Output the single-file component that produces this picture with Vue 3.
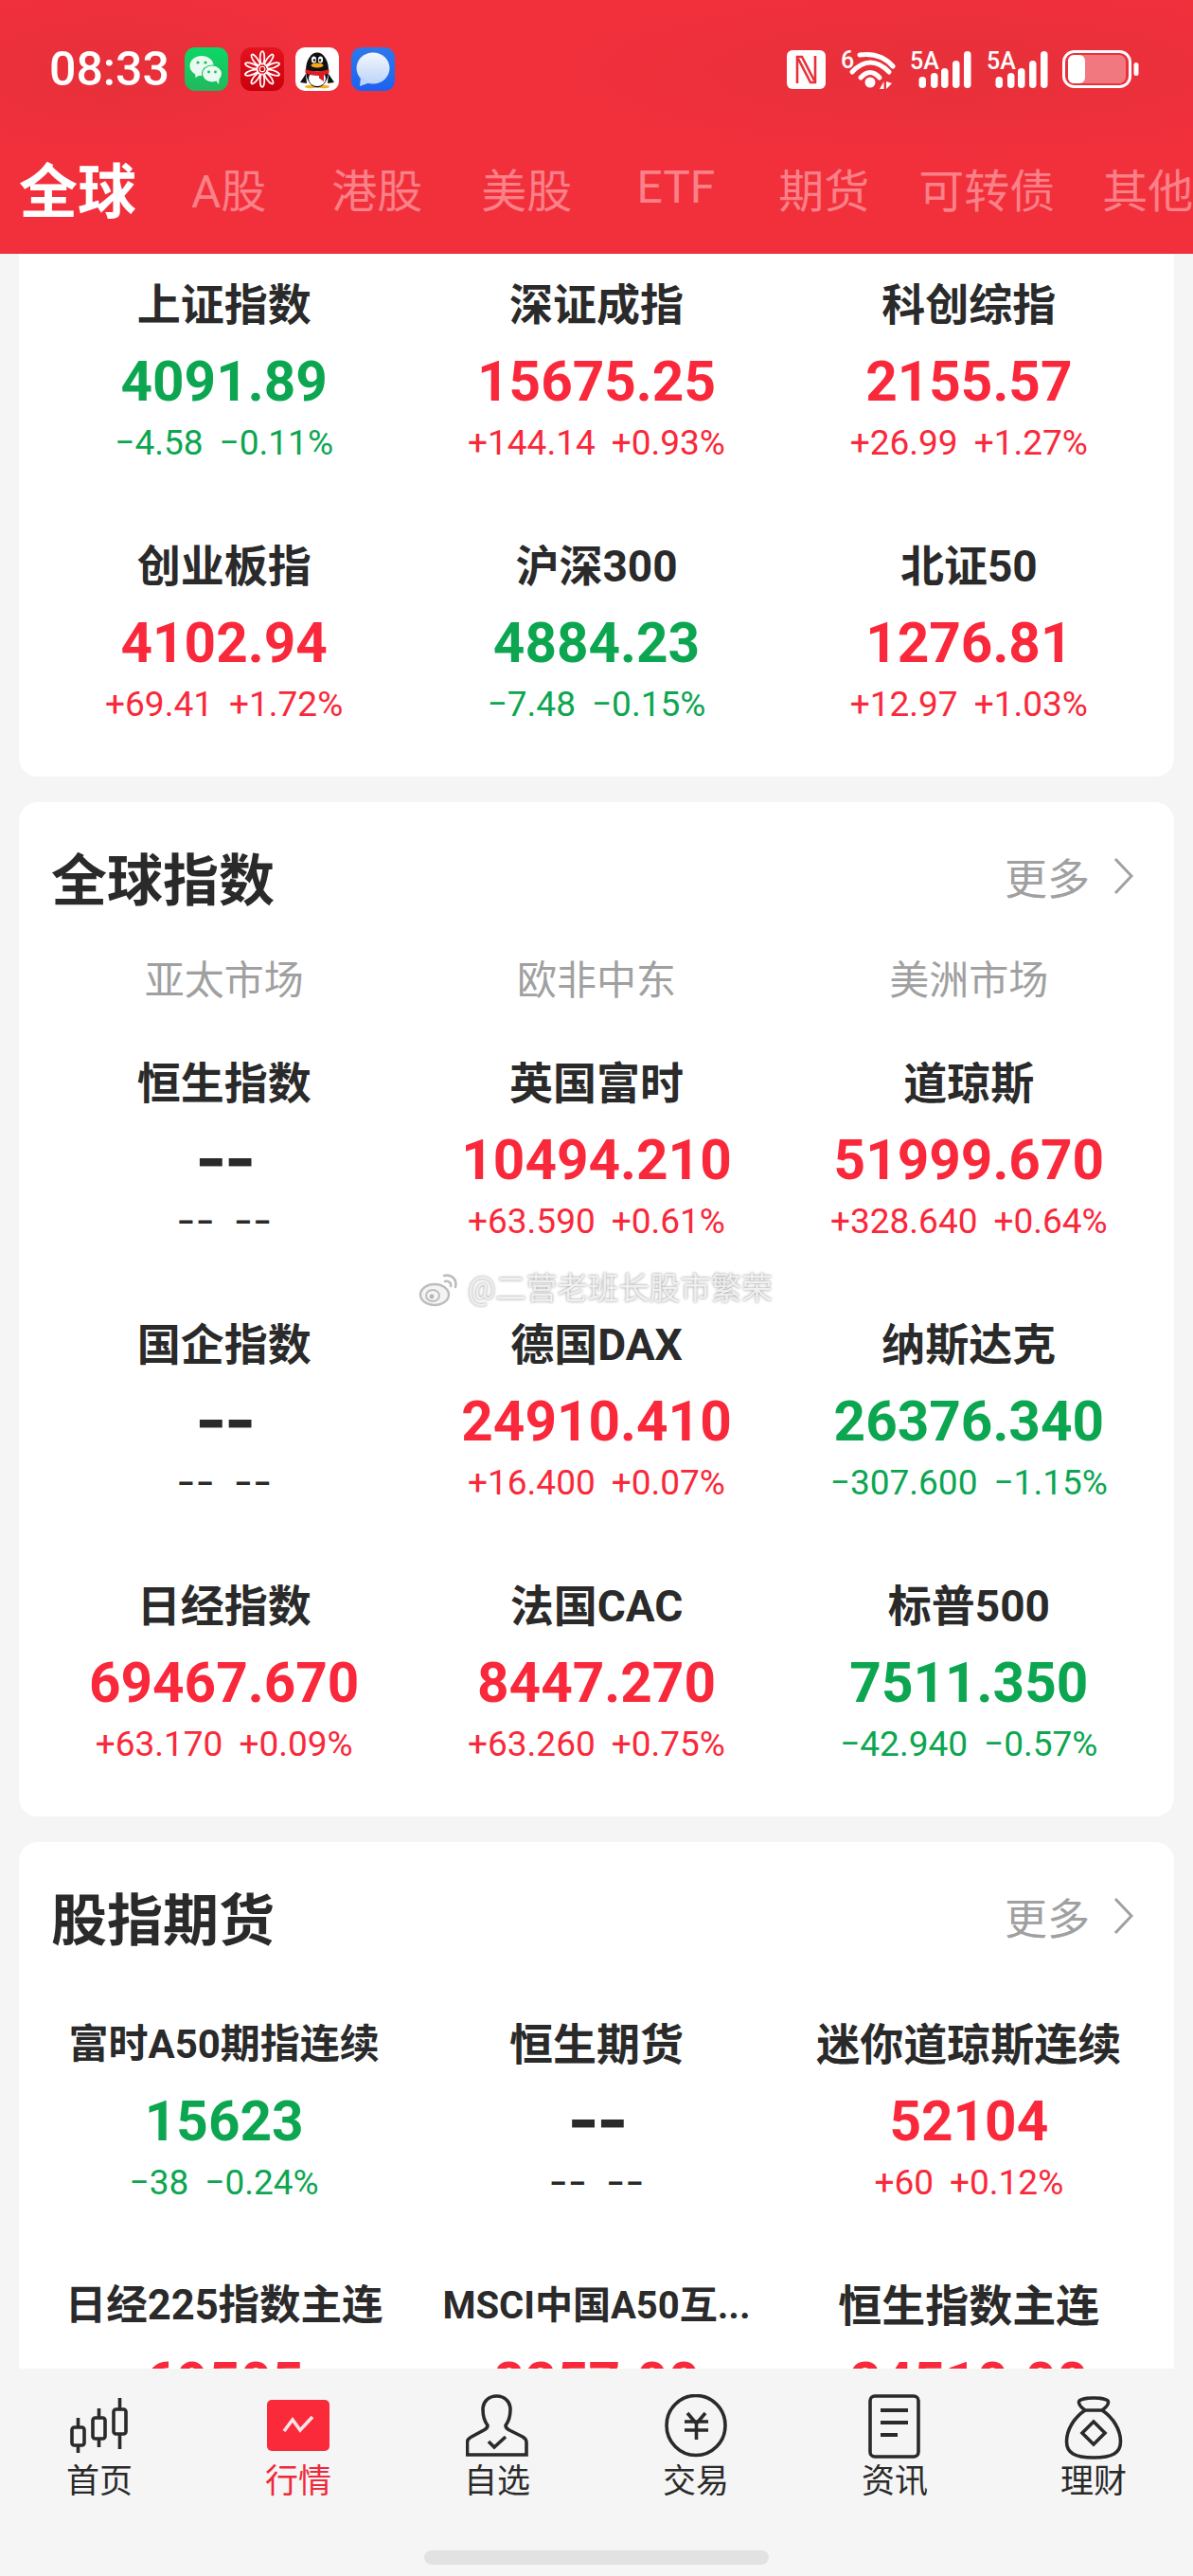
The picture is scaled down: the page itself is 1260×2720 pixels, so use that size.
<template>
  <div class="page">
    <header class="top">
      <div class="status">
        <div class="status-left">
          <span class="time">08:33</span>
          <div class="apps">
            <svg class="app" viewBox="0 0 46 46">
              <defs>
                <linearGradient id="wx" x1="0" y1="0" x2="0" y2="1"><stop offset="0" stop-color="#0bd866" /><stop offset="1" stop-color="#22b85c" /></linearGradient>
                <linearGradient id="wb" x1="0" y1="0" x2="0" y2="1"><stop offset="0" stop-color="#e4131f" /><stop offset="1" stop-color="#c9000d" /></linearGradient>
                <linearGradient id="msg" x1="0" y1="0" x2="0" y2="1"><stop offset="0" stop-color="#2f78ea" /><stop offset="1" stop-color="#1c62f0" /></linearGradient>
                <linearGradient id="bub" x1="0" y1="0" x2="0" y2="1"><stop offset="0" stop-color="#f4f7fd" /><stop offset="1" stop-color="#bcd4f8" /></linearGradient>
              </defs>
              <rect width="46" height="46" rx="11" fill="url(#wx)" />
              <ellipse cx="18" cy="19.5" rx="12.5" ry="10.5" fill="#e9fbf0" />
              <path d="M11 26 L11.5 32 L18 28Z" fill="#e9fbf0" />
              <ellipse cx="29" cy="28" rx="11" ry="9.5" fill="#0fc45e" />
              <ellipse cx="29" cy="28" rx="10" ry="8.5" fill="#e9fbf0" />
              <path d="M33 35 L36 39 L36.5 33Z" fill="#e9fbf0" />
              <circle cx="14" cy="16" r="1.6" fill="#22b85c" /><circle cx="22" cy="16" r="1.6" fill="#22b85c" />
              <circle cx="25.5" cy="26" r="1.4" fill="#22b85c" /><circle cx="32.5" cy="26" r="1.4" fill="#22b85c" />
            </svg>
            <svg class="app" viewBox="0 0 46 46">
              <rect width="46" height="46" rx="11" fill="url(#wb)" />
              <g fill="none" stroke="#fff" stroke-width="1.7">
                <ellipse v-for="a in petals" :key="a" cx="23" cy="11" rx="2.3" ry="7" :transform="`rotate(${a} 23 23)`" />
              </g>
              <circle cx="23" cy="23" r="4.5" fill="#d60a16" />
              <circle cx="23" cy="23" r="2.8" fill="none" stroke="#fff" stroke-width="1.1" />
            </svg>
            <svg class="app" viewBox="0 0 46 46">
              <rect width="46" height="46" rx="10" fill="#fff" />
              <ellipse cx="16" cy="41.5" rx="6" ry="1.8" fill="#f2b21c" /><ellipse cx="30" cy="41.5" rx="6" ry="1.8" fill="#f2b21c" />
              <ellipse cx="23" cy="24" rx="12" ry="18.5" fill="#111" />
              <path d="M11 28 L5 37 L12 38Z M35 28 L41 37 L34 38Z" fill="#111" />
              <ellipse cx="23" cy="33" rx="9" ry="8" fill="#fff" />
              <ellipse cx="19.5" cy="13" rx="2.6" ry="3.6" fill="#fff" /><ellipse cx="26.5" cy="13" rx="2.6" ry="3.6" fill="#fff" />
              <circle cx="20" cy="13.5" r="1.3" fill="#111" /><circle cx="26" cy="13.5" r="1.3" fill="#111" />
              <ellipse cx="23" cy="19" rx="6.5" ry="2.6" fill="#f4a81c" />
              <path d="M10.5 23 C17 26 29 26 35.5 23 L35.5 27 C32 28.5 31 29 30 29.5 L30 36 L25 32.5 L25 30 C19 30 14 29 10.5 27Z" fill="#dd1c24" />
            </svg>
            <svg class="app" viewBox="0 0 46 46">
              <rect width="46" height="46" rx="11" fill="url(#msg)" />
              <ellipse cx="23" cy="22" rx="17.5" ry="16.5" fill="url(#bub)" />
              <path d="M10 31 L9 41 L20 37Z" fill="#bcd4f8" />
            </svg>
          </div>
        </div>
        <div class="status-right">
          <svg class="ic-nfc" viewBox="0 0 41 41">
            <rect width="41" height="41" rx="6" fill="#fff" />
            <path d="M11 35 V7 H16 L29 32 M30 6 V34 H25 L12 9" fill="none" stroke="#e8303a" stroke-width="2.6" />
          </svg>
          <svg class="ic-wifi" viewBox="0 -8 58 49">
            <text x="0" y="19" class="st-text">6</text>
            <g fill="none" stroke="#fff" stroke-width="5" stroke-linecap="round">
              <path d="M20 5 Q42 2 55 17" />
              <path d="M12 23 Q31 3 51 23" />
              <path d="M21 29 Q31 18 41 29" />
            </g>
            <circle cx="31" cy="34" r="5.5" fill="#fff" />
            <path d="M41 41 L45.5 33 V41Z M48 33 V41 L54 35Z" fill="#fff" />
          </svg>
          <svg v-for="n in 2" :key="n" class="ic-sig" viewBox="0 -8 65 49">
            <text x="0" y="20" class="st-text">5A</text>
            <rect v-for="b in bars" :key="b[0]" :x="b[0]" :y="b[1]" width="7.5" :height="40 - b[1]" rx="3.75" fill="#fff" />
          </svg>
          <svg class="ic-bat" viewBox="0 0 81 41">
            <rect x="1.5" y="1.5" width="70" height="37" rx="11" fill="none" stroke="#fff" stroke-width="3" />
            <rect x="6" y="5" width="61" height="30" rx="7" fill="#fff" fill-opacity=".35" />
            <rect x="6" y="5" width="18" height="30" rx="6" fill="#fff" />
            <rect x="75.5" y="13" width="5" height="14" rx="2.5" fill="#fff" />
          </svg>
        </div>
      </div>
      <nav class="tabs">
        <span v-for="t in tabs" :key="t.label" class="tab" :class="{ on: t.on }" :style="{ marginLeft: t.gap + 'px' }">{{ t.label }}</span>
      </nav>
    </header>

    <main class="scroll">
      <section class="card first">
        <div class="grid">
          <div v-for="c in domestic" :key="c.name" class="cell">
            <div class="name">{{ c.name }}</div>
            <div class="price" :class="c.dir">{{ c.price }}</div>
            <div class="chg" :class="c.dir"><span>{{ c.chg }}</span><span>{{ c.pct }}</span></div>
          </div>
        </div>
      </section>

      <section class="card">
        <div class="head">
          <h2>全球指数</h2>
          <div class="more">更多
            <svg viewBox="0 0 21 40" class="chev"><path d="M2 2 L19 20 L2 38" fill="none" stroke="#a0a0a0" stroke-width="3" /></svg>
          </div>
        </div>
        <div class="subs"><span>亚太市场</span><span>欧非中东</span><span>美洲市场</span></div>
        <div class="grid global">
          <div v-for="c in globalIdx" :key="c.name" class="cell">
            <div class="name">{{ c.name }}</div>
            <div class="price" :class="c.dir">{{ c.price }}</div>
            <div class="chg" :class="c.dir"><span>{{ c.chg }}</span><span>{{ c.pct }}</span></div>
          </div>
        </div>
      </section>

      <section class="card">
        <div class="head">
          <h2>股指期货</h2>
          <div class="more">更多
            <svg viewBox="0 0 21 40" class="chev"><path d="M2 2 L19 20 L2 38" fill="none" stroke="#a0a0a0" stroke-width="3" /></svg>
          </div>
        </div>
        <div class="grid futures">
          <div v-for="c in futures" :key="c.name" class="cell">
            <div class="name" :class="c.size">{{ c.name }}</div>
            <div class="price" :class="c.dir">{{ c.price }}</div>
            <div v-if="c.chg" class="chg" :class="c.dir"><span>{{ c.chg }}</span><span>{{ c.pct }}</span></div>
          </div>
        </div>
      </section>
    </main>

    <div class="mark">
      <svg viewBox="0 0 44 38" class="mark-logo">
        <g fill="none" stroke="#bdbdbd">
          <ellipse cx="17" cy="25" rx="15" ry="11" fill="#f4f4f4" stroke-width="2.4" />
          <ellipse cx="15" cy="26" rx="7" ry="6" stroke-width="2" />
          <path d="M27 5 C35 3 41 9 39 17 M28 11 C32 10 35 13 34 16" stroke-width="2.6" stroke-linecap="round" />
        </g>
        <circle cx="14" cy="27" r="2.4" fill="#b5b5b5" />
      </svg>
      <span>@二营老班长股市繁荣</span>
    </div>

    <footer class="bar">
      <div class="bar-items">
        <div v-for="item in navItems" :key="item" class="bar-item" :class="{ on: item === '行情' }">
          <svg class="bar-ic" viewBox="0 0 66 70" fill="none" stroke="#2a2a2a" stroke-width="3.6">
            <g v-if="item === '首页'">
              <rect x="4" y="35" width="13" height="19" rx="2.5" /><path d="M10.5 25 V35 M10.5 54 V62" />
              <rect x="26" y="25" width="13" height="22" rx="2.5" /><path d="M32.5 15 V25 M32.5 47 V56" />
              <rect x="48" y="16" width="13" height="26" rx="2.5" /><path d="M54.5 4 V16 M54.5 42 V58" />
            </g>
            <g v-else-if="item === '行情'">
              <rect x="0" y="6" width="66" height="54" rx="5" fill="#fb2a3a" stroke="none" />
              <path d="M18 39 L27 27 L35 38 L48 24" stroke="#fff" stroke-opacity=".88" />
            </g>
            <g v-else-if="item === '自选'">
              <path d="M23 33 C23 36 21 37 19 38 L6 45 C3 46.5 1.5 48 1.5 51 V64 H64 V51 C64 48 62.5 46.5 60 45 L46 38 C44 37 42 36 42 33 C45 29 47 24 47 16 C47 8 41 2 32.5 2 C24 2 18 8 18 16 C18 24 20 29 23 33Z" />
              <path d="M24 50 L30 56 L42 45" />
            </g>
            <g v-else-if="item === '交易'">
              <ellipse cx="33" cy="33" rx="31" ry="31.5" />
              <path d="M24 20 L33.5 31 L43 20 M21 29 H46 M21 38 H46 M33.5 31 V48" />
            </g>
            <g v-else-if="item === '资讯'">
              <rect x="7" y="2" width="51" height="64" rx="5" />
              <path d="M18 17 H47 M18 30 H47 M18 43 H36" stroke-width="4" />
            </g>
            <g v-else>
              <path d="M24 17 C12 25 4.5 38 4.5 50 C4.5 62 13 67 33 67 C53 67 61.5 62 61.5 50 C61.5 38 54 25 42 17" />
              <path d="M24 17 C20 14 17 11 17.5 8 C18 5 26 4 33 4 C40 4 48 5 48.5 8 C49 11 46 14 42 17Z" />
              <path d="M33 29 L45 41 L33 53 L21 41Z" />
            </g>
          </svg>
          <span>{{ item }}</span>
        </div>
      </div>
      <div class="handle"></div>
    </footer>
  </div>
</template>

<script setup>
const petals = [0, 36, 72, 108, 144, 180, 216, 252, 288, 324]
const bars = [[9.5, 28], [22, 24], [33, 19], [45, 11], [57, 1]]

const tabs = [
  { label: '全球', on: true, gap: 0 },
  { label: 'A股', gap: 58 },
  { label: '港股', gap: 69 },
  { label: '美股', gap: 62 },
  { label: 'ETF', gap: 68 },
  { label: '期货', gap: 67 },
  { label: '可转债', gap: 52 },
  { label: '其他', gap: 50 }
]

const none = { price: '--', chg: '--', pct: '--', dir: 'flat' }

const domestic = [
  { name: '上证指数', price: '4091.89', chg: '−4.58', pct: '−0.11%', dir: 'down' },
  { name: '深证成指', price: '15675.25', chg: '+144.14', pct: '+0.93%', dir: 'up' },
  { name: '科创综指', price: '2155.57', chg: '+26.99', pct: '+1.27%', dir: 'up' },
  { name: '创业板指', price: '4102.94', chg: '+69.41', pct: '+1.72%', dir: 'up' },
  { name: '沪深300', price: '4884.23', chg: '−7.48', pct: '−0.15%', dir: 'down' },
  { name: '北证50', price: '1276.81', chg: '+12.97', pct: '+1.03%', dir: 'up' }
]

const globalIdx = [
  { name: '恒生指数', ...none },
  { name: '英国富时', price: '10494.210', chg: '+63.590', pct: '+0.61%', dir: 'up' },
  { name: '道琼斯', price: '51999.670', chg: '+328.640', pct: '+0.64%', dir: 'up' },
  { name: '国企指数', ...none },
  { name: '德国DAX', price: '24910.410', chg: '+16.400', pct: '+0.07%', dir: 'up' },
  { name: '纳斯达克', price: '26376.340', chg: '−307.600', pct: '−1.15%', dir: 'down' },
  { name: '日经指数', price: '69467.670', chg: '+63.170', pct: '+0.09%', dir: 'up' },
  { name: '法国CAC', price: '8447.270', chg: '+63.260', pct: '+0.75%', dir: 'up' },
  { name: '标普500', price: '7511.350', chg: '−42.940', pct: '−0.57%', dir: 'down' }
]

const futures = [
  { name: '富时A50期指连续', size: 'mid', price: '15623', chg: '−38', pct: '−0.24%', dir: 'down' },
  { name: '恒生期货', ...none },
  { name: '迷你道琼斯连续', price: '52104', chg: '+60', pct: '+0.12%', dir: 'up' },
  { name: '日经225指数主连', size: 'small', price: '69505', dir: 'up' },
  { name: 'MSCI中国A50互...', size: 'tiny', price: '8257.00', dir: 'up' },
  { name: '恒生指数主连', price: '24510.00', dir: 'up' }
]

const navItems = ['首页', '行情', '自选', '交易', '资讯', '理财']
</script>

<style>
body {
  margin: 0;
  background: #f5f5f5;
}
</style>

<style scoped>
.page {
  position: relative;
  display: flex;
  flex-direction: column;
  width: 1260px;
  height: 2720px;
  overflow: hidden;
  background: #f5f5f5;
  color: #2a2a2a;
  font-family: Roboto, "Noto Sans CJK SC", sans-serif;
}

.top {
  flex: none;
  height: 268px;
  background:
    radial-gradient(ellipse 230px 90px at 120px 75px, #e6303a, transparent),
    radial-gradient(ellipse 430px 90px at 1010px 75px, #e6303a, transparent),
    #f1303c;
}

.status {
  display: flex;
  align-items: center;
  justify-content: space-between;
  height: 146px;
  padding: 0 57px 0 52px;
  box-sizing: border-box;
}

.status-left {
  display: flex;
  align-items: center;
  gap: 18px;
}

.time {
  color: #fff;
  font-size: 50px;
  font-weight: 500;
  line-height: 1;
  width: 125px;
}

.apps {
  display: flex;
  gap: 12.5px;
}

.app {
  display: block;
  width: 46px;
  height: 46px;
}

.status-right {
  display: flex;
  align-items: center;
  gap: 15.5px;
}

.ic-nfc {
  width: 41px;
  height: 41px;
}

.ic-wifi {
  width: 58px;
  height: 49px;
  margin-top: -8px;
}

.ic-sig {
  width: 65px;
  height: 49px;
  margin-top: -8px;
}

.ic-bat {
  width: 81px;
  height: 41px;
}

.st-text {
  fill: #fff;
  font-family: Roboto, sans-serif;
  font-size: 25px;
  font-weight: 500;
}

.tabs {
  display: flex;
  align-items: center;
  height: 103px;
  padding-left: 20px;
  white-space: nowrap;
  overflow: hidden;
}

.tab {
  flex: none;
  color: #fb8087;
  font-size: 48px;
}

.tab.on {
  color: #fff;
  font-size: 62px;
  font-weight: 700;
}

.scroll {
  flex: 1;
  min-height: 0;
  overflow: hidden;
  display: flex;
  flex-direction: column;
  gap: 27px;
  padding: 0 20px;
}

.card {
  flex: none;
  background: #fff;
  border-radius: 20px;
  padding: 40px 20px 2px;
}

.card.first {
  padding-top: 27px;
  border-radius: 0 0 20px 20px;
}

.head {
  display: flex;
  align-items: center;
  justify-content: space-between;
  height: 76px;
  padding: 0 23px 0 14px;
}

h2 {
  margin: 0;
  font-size: 59px;
  font-weight: 700;
}

.more {
  display: flex;
  align-items: center;
  gap: 25px;
  color: #a0a0a0;
  font-size: 45px;
}

.chev {
  width: 21px;
  height: 40px;
}

.subs {
  display: grid;
  grid-template-columns: repeat(3, 1fr);
  margin-top: 48px;
  height: 50px;
  line-height: 50px;
  text-align: center;
  color: #a0a0a0;
  font-size: 42px;
}

.grid {
  display: grid;
  grid-template-columns: repeat(3, 1fr);
  row-gap: 29px;
}

.grid.global {
  margin-top: 56px;
}

.grid.futures {
  margin-top: 71px;
}

.cell {
  height: 247px;
  text-align: center;
  white-space: nowrap;
}

.name {
  height: 50px;
  padding-top: 2px;
  line-height: 50px;
  font-size: 46px;
  font-weight: 700;
}

.name.mid {
  font-size: 42px;
}

.name.small {
  font-size: 43.5px;
}

.name.tiny {
  font-size: 40px;
}

.price {
  margin-top: 25px;
  height: 62px;
  line-height: 62px;
  font-size: 58.5px;
  font-weight: 700;
}

.price.flat {
  font-family: Inter, sans-serif;
  font-size: 72px;
  line-height: 58px;
  letter-spacing: -3px;
}

.chg {
  display: flex;
  justify-content: center;
  gap: 17px;
  margin-top: 14px;
  height: 40px;
  line-height: 40px;
  font-size: 37px;
}

.chg.flat {
  gap: 20px;
  font-family: Inter, sans-serif;
  font-size: 44px;
  line-height: 36px;
}

.up {
  color: #f9283a;
}

.down {
  color: #0ca651;
}

.flat {
  color: #2a2a2a;
}

.mark {
  position: absolute;
  left: 442px;
  top: 1341px;
  display: flex;
  align-items: center;
  gap: 8px;
  color: #f0f0f0;
  font-size: 32.5px;
  line-height: 40px;
  white-space: nowrap;
  text-shadow: 0 0 3px rgba(0, 0, 0, 0.45);
}

.mark-logo {
  width: 44px;
  height: 38px;
}

.bar {
  flex: none;
  height: 219px;
  background: #f5f5f5;
  display: flex;
  flex-direction: column;
  align-items: center;
}

.bar-items {
  display: grid;
  grid-template-columns: repeat(6, 210px);
  padding-top: 27px;
}

.bar-item {
  display: flex;
  flex-direction: column;
  align-items: center;
  color: #2a2a2a;
  font-size: 35px;
  line-height: 42px;
}

.bar-item.on {
  color: #f0283c;
}

.bar-ic {
  width: 66px;
  height: 70px;
  margin-bottom: 2px;
}

.handle {
  width: 364px;
  height: 15px;
  margin-top: 51px;
  border-radius: 8px;
  background: #e2e2e2;
}
</style>
